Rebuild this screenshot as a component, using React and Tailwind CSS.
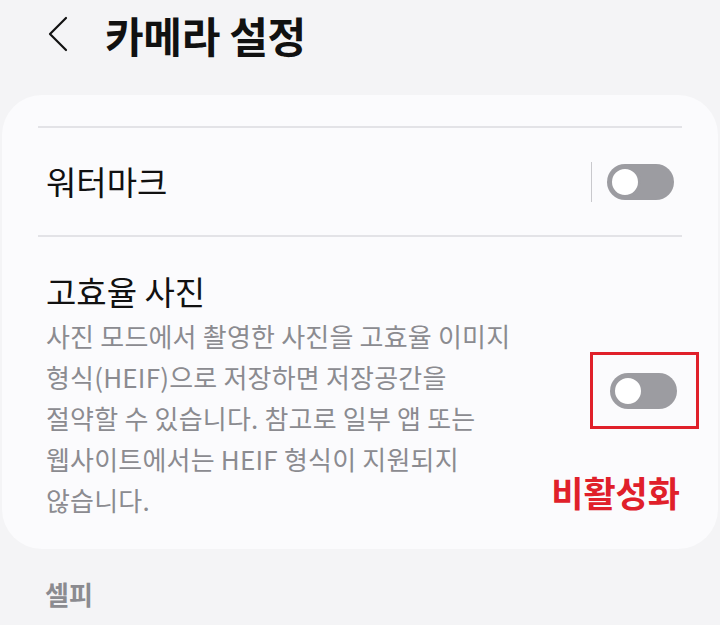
import React from "react";

function Toggle() {
  return (
    <div className="flex h-[36px] w-[67px] items-center rounded-full bg-[#9c9ca1] px-[2px]">
      <div className="h-[32px] w-[32px] rounded-full border-[3px] border-[#9c9ca1] bg-white" />
    </div>
  );
}

export default function App() {
  return (
    <div
      className="h-[625px] w-[720px] overflow-hidden bg-[#f4f4f6]"
      style={{ fontFamily: '"Noto Sans CJK KR", "Noto Sans", sans-serif' }}
    >
      <header className="flex h-[95px] items-start pt-[16px]">
        <svg width="24" height="36" viewBox="0 0 24 36" className="ml-[46px]">
          <path d="M20 2 L4 18 L20 34" fill="none" stroke="#111" strokeWidth="2.2" strokeLinecap="round" strokeLinejoin="round" />
        </svg>
        <h1 className="ml-[35px] -mt-[2px] text-[42px] font-bold leading-none tracking-[-0.3px] text-[#111]">
          카메라 설정
        </h1>
      </header>

      <section className="mx-[2px] rounded-[40px] bg-[#fbfbfd] px-[36px] pt-[31px] pb-[29px]">
        <div className="h-[2px] bg-[#e3e3e7]" />

        <div className="flex h-[107px] items-center justify-between pl-[8px]">
          <span className="text-[33px] leading-none text-[#111]">워터마크</span>
          <div className="mr-[8px] flex items-center">
            <div className="mr-[15px] h-[40px] w-px bg-[#c9c9cd]" />
            <Toggle />
          </div>
        </div>

        <div className="h-[2px] bg-[#e3e3e7]" />

        <div className="flex items-start justify-between pl-[8px] pt-[33px]">
          <div>
            <p className="text-[33px] leading-[42px] text-[#111]">고효율 사진</p>
            <p className="mt-[3px] text-[26px] leading-[41px] tracking-[0.2px] text-[#8b8b90]">
              사진 모드에서 촬영한 사진을 고효율 이미지
              <br />
              형식(HEIF)으로 저장하면 저장공간을
              <br />
              절약할 수 있습니다. 참고로 일부 앱 또는
              <br />
              웹사이트에서는 HEIF 형식이 지원되지
              <br />
              않습니다.
            </p>
          </div>
          <div className="mr-[-17px] flex flex-col items-end pt-[82px]">
            <div className="flex h-[77px] w-[109px] items-center justify-center border-[3px] border-[#e0202a] pr-[3px]">
              <Toggle />
            </div>
            <span className="mt-[45px] mr-[19px] text-[35px] font-bold leading-none text-[#e0202a]">
              비활성화
            </span>
          </div>
        </div>
      </section>

      <p className="ml-[45px] mt-[32px] text-[26px] font-bold leading-none text-[#8b8b90]">셀피</p>
    </div>
  );
}
